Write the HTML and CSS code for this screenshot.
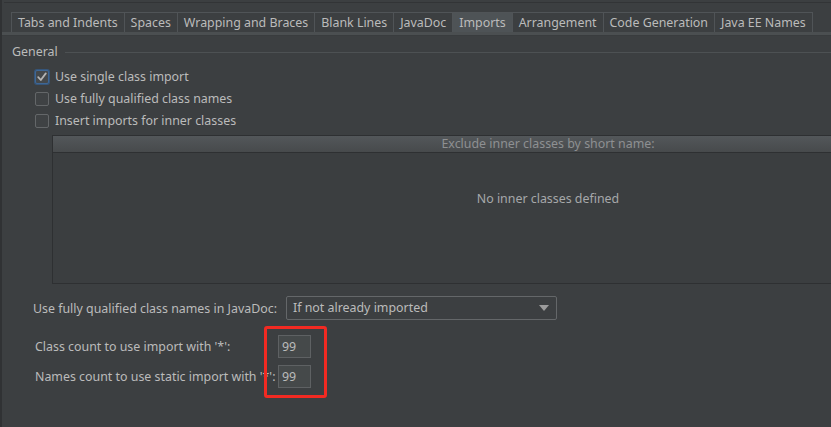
FILE: index.html
```html
<!DOCTYPE html>
<html>
<head>
<meta charset="utf-8">
<link rel="stylesheet" href="styles.css">
</head>
<body>
<div class="app">
  <div class="topline"></div>
  <div class="tabs">
    <div class="tab">Tabs and Indents</div>
    <div class="tab">Spaces</div>
    <div class="tab">Wrapping and Braces</div>
    <div class="tab">Blank Lines</div>
    <div class="tab">JavaDoc</div>
    <div class="tab tab-active">Imports</div>
    <div class="tab">Arrangement</div>
    <div class="tab">Code Generation</div>
    <div class="tab">Java EE Names</div>
  </div>
  <div class="tab-rule"></div>
  <div class="content">
    <div class="group-title"><span>General</span><div class="group-line"></div></div>
    <div class="options">
      <label class="option"><span class="check check-on"><svg width="12" height="12" viewBox="0 0 12 12"><path d="M2.2 6.2 L4.8 9 L9.8 2.4" fill="none" stroke="#b4b4b4" stroke-width="1.8" stroke-linecap="round" stroke-linejoin="round"/></svg></span>Use single class import</label>
      <label class="option"><span class="check"></span>Use fully qualified class names</label>
      <label class="option"><span class="check"></span>Insert imports for inner classes</label>
    </div>
    <div class="table">
      <div class="table-head">Exclude inner classes by short name:</div>
      <div class="table-body">No inner classes defined</div>
    </div>
    <div class="combo-row">
      <span class="combo-label">Use fully qualified class names in JavaDoc:</span>
      <div class="combo"><span>If not already imported</span><span class="arrow"></span></div>
    </div>
    <div class="counts">
      <span class="count-label">Class count to use import with '*':</span>
      <div class="field">99</div>
      <span class="count-label">Names count to use static import with '*':</span>
      <div class="field">99</div>
    </div>
  </div>
  <div class="side-marker"></div>
  <div class="annotation"></div>
</div>
</body>
</html>
```

FILE: styles.css
```css
html, body {
  margin: 0;
  padding: 0;
  background: #3c3f41;
  overflow: hidden;
}
.app {
  position: relative;
  width: 831px;
  height: 427px;
  overflow: hidden;
  box-sizing: border-box;
  border-left: 2px solid #303234;
  background: #3c3f41;
  font-family: "Noto Sans", "Open Sans", sans-serif;
  font-size: 12.4px;
  color: #bbbbbb;
}
.topline {
  margin-top: 2px;
  margin-left: 2px;
  border-top: 1px solid #323436;
}
.tabs {
  display: flex;
  margin-top: 9px;
  padding-left: 9px;
  height: 20px;
}
.tab {
  box-sizing: border-box;
  height: 20px;
  line-height: 19px;
  padding: 0 6px 0 6px;
  border: 1px solid #505457;
  border-bottom: none;
  margin-right: -1px;
  white-space: nowrap;
}
.tab-active {
  background: #4e5356;
}
.tab-rule {
  height: 4px;
  background: #4b4f51;
  border-bottom: 1px solid #393c3e;
  box-sizing: border-box;
}
.content {
  padding-left: 10px;
}
.group-title {
  display: flex;
  align-items: center;
  height: 16px;
  margin-top: 8px;
  line-height: 16px;
}
.group-line {
  flex: 1;
  height: 1px;
  background: #4d5153;
  margin-left: 7px;
}
.options {
  margin-top: 6px;
  padding-left: 23px;
}
.option {
  display: flex;
  align-items: center;
  height: 22px;
  line-height: 22px;
}
.check {
  box-sizing: border-box;
  width: 14px;
  height: 14px;
  border: 1px solid #646769;
  border-radius: 2px;
  background: #3f4244;
  margin-right: 6px;
  display: flex;
  align-items: center;
  justify-content: center;
}
.check-on {
  border-color: #3e6795;
  box-shadow: 0 0 0 1px #35557a;
  background: #44484b;
}
.table {
  margin-top: 3px;
  margin-left: 40px;
  width: 992px;
  height: 149px;
  box-sizing: border-box;
  border: 1px solid #2e3032;
  display: flex;
  flex-direction: column;
}
.table-head {
  height: 16px;
  line-height: 15px;
  text-align: center;
  color: #8e9092;
  background: linear-gradient(#53575a, #474a4c);
  border-bottom: 1px solid #2e3032;
}
.table-body {
  flex: 1;
  text-align: center;
  padding-top: 37px;
  line-height: 18px;
  color: #a6a8aa;
  background: #3b3e40;
}
.combo-row {
  display: flex;
  align-items: center;
  margin-top: 12px;
  padding-left: 21px;
  height: 24px;
}
.combo-label {
  white-space: nowrap;
  width: 253px;
}
.combo {
  box-sizing: border-box;
  width: 271px;
  height: 24px;
  border: 1px solid #646769;
  border-radius: 2px;
  display: flex;
  align-items: center;
  justify-content: space-between;
  padding: 0 6px 0 6px;
  line-height: 22px;
}
.arrow {
  width: 0;
  height: 0;
  border-left: 5px solid transparent;
  border-right: 5px solid transparent;
  border-top: 6px solid #9c9c9c;
  margin-right: 1px;
}
.counts {
  display: grid;
  grid-template-columns: 243px 33px;
  row-gap: 7px;
  align-items: center;
  margin-top: 15px;
  padding-left: 23px;
}
.count-label {
  white-space: nowrap;
  overflow: hidden;
}
.field {
  box-sizing: border-box;
  height: 23px;
  line-height: 21px;
  border: 1px solid #5e6163;
  background: #45494a;
  padding-left: 3px;
}
.side-marker {
  position: absolute;
  left: -2px;
  top: 140px;
  width: 2px;
  height: 25px;
  background: #3b63a5;
}
.annotation {
  position: absolute;
  left: 262px;
  top: 326px;
  width: 63px;
  height: 72px;
  box-sizing: border-box;
  border: 3px solid #f22a22;
  border-radius: 3px;
}
```
